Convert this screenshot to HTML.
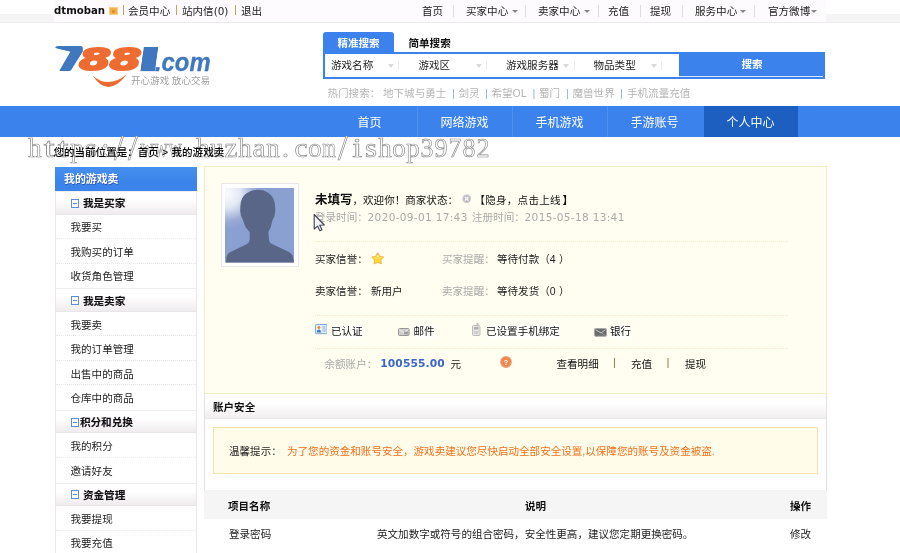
<!DOCTYPE html>
<html lang="zh-CN">
<head>
<meta charset="utf-8">
<title>7881.com 个人中心</title>
<style>
*{margin:0;padding:0;box-sizing:border-box}
html,body{width:900px;height:553px;overflow:hidden;background:#fff}
body{position:relative;font-family:"Liberation Sans","Noto Sans CJK SC",sans-serif;font-size:10.55px;color:#222;line-height:14px}
.a{position:absolute;white-space:nowrap}
body{will-change:transform}
.b{font-weight:bold}
.g{color:#aaa}
/* top bar */
#tb-band-l{left:0;top:14px;width:54px;height:9px;background:#f5f5f5}
#tb-band-r{left:826px;top:14px;width:74px;height:9px;background:#f5f5f5}
#tb-c{left:54px;top:0;width:772px;height:23px;background:#fdfbfd}
#tb-line{left:0;top:22px;width:900px;height:1px;background:#ececec}
.tsep{position:absolute;top:5px;width:1px;height:12px;background:#ddd}
.osep{top:2px;color:#cf9550;font-size:11.5px}
.car{position:absolute;top:10px;width:0;height:0;border-left:3px solid transparent;border-right:3px solid transparent;border-top:3px solid #888}
/* search */
#tab1{left:323px;top:31.6px;width:71px;height:22.4px;background:#3b82ec;border-radius:3px 3px 0 0;color:#fff;font-weight:bold;text-align:center;line-height:22px}
#sbox{left:323px;top:51.6px;width:502px;height:27.4px;border:2px solid #3b82ec;background:#fff}
#sbtn{left:679px;top:53px;width:146px;height:23.5px;background:#3b82ec;color:#fff;font-weight:bold;text-align:center;line-height:22px}
.dar{position:absolute;top:64px;width:0;height:0;border-left:3.5px solid transparent;border-right:3.5px solid transparent;border-top:4px solid #dadada}
.dsep{position:absolute;top:60.5px;width:1px;height:9px;background:#ececec}
.hot{color:#b5b5b5}
.hsep{top:85.5px;color:#8fb1ea;font-size:11px}
/* nav */
#nav{left:0;top:106px;width:900px;height:31.3px;background:#3b82ec}
#nav-on{left:703.6px;top:106px;width:94.6px;height:31.3px;background:#1c5fc0}
.nv{position:absolute;top:106px;width:95px;height:31px;line-height:34.6px;text-align:center;color:#fff;font-size:12px}
.nsep{position:absolute;top:106px;width:1px;height:31.3px;background:#4f90f0}
/* sidebar */
#side{left:54.5px;top:167px;width:142.5px;height:400px;border:1px solid #e9e7e9;border-top:0;background:#fff}
#side-h{left:54.5px;top:167px;width:142.5px;height:24px;background:linear-gradient(#4590ee,#3a84eb 60%)}
.sh{position:absolute;left:55.5px;width:140.5px;height:24px;background:linear-gradient(#fff,#fff 35%,#f0ebee);border-top:1px solid #efefef;border-bottom:1px solid #e9e6e8}
.sd{position:absolute;left:56px;width:140px;height:0;border-top:1px dotted #e9e9e9}
.ico-m{position:absolute;width:8px;height:9px;border:1px solid #5b8fd6;background:#fff}
.ico-m:after{content:"";position:absolute;left:1px;top:3px;width:4px;height:1px;background:#5b8fd6}
/* main panel */
#pn{left:204px;top:166px;width:623px;height:228px;background:#fffef0;border:1px solid #f3ebc3}
.dot{position:absolute;left:315px;width:473px;height:0;border-top:1px dotted #f8e6c4}
#avf{left:221px;top:183.3px;width:78px;height:84px;background:#fff;border:1px solid #e8e6e8}
#sec-h{left:204px;top:394px;width:623px;height:25px;background:linear-gradient(#fff,#fff 35%,#f1eeef);border-left:1px solid #e2e2e2;border-right:1px solid #e2e2e2;border-bottom:1px solid #e8e8e8}
#sec-b{left:204px;top:419px;width:623px;height:71px;border-left:1px solid #e2e2e2;border-right:1px solid #e2e2e2;background:#fff}
#warn{left:213px;top:427px;width:605px;height:47px;background:#fffcea;border:1px solid #f7dfae}
#th{left:204px;top:490px;width:623px;height:29px;background:#f5f5f5}
.or{color:#f2701d}
.dv{font-family:"DejaVu Sans",sans-serif;font-size:10.4px}
.lb{background:#fefefb;line-height:13.2px;color:#111}
.hd{color:#111;text-shadow:.5px .4px 0 rgba(70,30,90,.35)}
.vd{font-family:"DejaVu Sans",sans-serif;font-size:10.5px;letter-spacing:.34px}
</style>
</head>
<body>
<!-- top bar -->
<div class="a" id="tb-band-l"></div><div class="a" id="tb-band-r"></div>
<div class="a" id="tb-c"></div><div class="a" id="tb-line"></div>
<div class="a b" style="left:54.3px;top:4px;font-size:11.3px;color:#111;font-family:'DejaVu Sans',sans-serif;transform:scaleX(.9);transform-origin:0 0">dtmoban</div>
<div class="a" style="left:109px;top:7px;width:8.5px;height:8px;background:#f2b04c;border:1px solid #f7cf86"><div style="position:absolute;left:1.5px;top:1.5px;width:3.5px;height:3px;background:#dc9434"></div></div>
<div class="a osep" style="left:122.0px">|</div>
<div class="a" style="left:128px;top:4px">会员中心</div>
<div class="a osep" style="left:175.0px">|</div>
<div class="a" style="left:182px;top:4px">站内信<span class="dv">(0)</span></div>
<div class="a osep" style="left:234.0px">|</div>
<div class="a" style="left:241px;top:4px">退出</div>

<div class="a" style="left:422px;top:4px">首页</div>
<div class="tsep" style="left:453px"></div>
<div class="a" style="left:466px;top:4px">买家中心</div><div class="car" style="left:512px"></div>
<div class="tsep" style="left:525px"></div>
<div class="a" style="left:538px;top:4px">卖家中心</div><div class="car" style="left:584px"></div>
<div class="tsep" style="left:598px"></div>
<div class="a" style="left:608px;top:4px">充值</div>
<div class="tsep" style="left:640px"></div>
<div class="a" style="left:650px;top:4px">提现</div>
<div class="tsep" style="left:682px"></div>
<div class="a" style="left:695px;top:4px">服务中心</div><div class="car" style="left:740px"></div>
<div class="tsep" style="left:754px"></div>
<div class="a" style="left:768px;top:4px">官方微博</div><div class="car" style="left:811px"></div>

<!-- logo -->
<svg class="a" style="left:50px;top:38px" width="200" height="60" viewBox="50 38 200 60">
<defs><clipPath id="c7"><path d="M53 46H86V73H58L70.5 51.4L53 47.6Z"/></clipPath><clipPath id="c1"><path d="M143.9 47.1H158.3L155 71.3H140.6Z"/></clipPath></defs>
<g clip-path="url(#c1)"><text transform="translate(117.3 71.3) skewX(-7.75) scale(2.9 1)" font-family="Liberation Sans, sans-serif" font-weight="bold" font-size="34" fill="#3f78be" stroke="#3f78be" stroke-width="1">1</text></g>
<g font-family="DejaVu Sans, sans-serif" font-weight="bold" font-style="italic" stroke-linejoin="round">
<g clip-path="url(#c7)"><text transform="translate(55.6 69.4) scale(1.43 1)" font-size="27.8" font-style="normal" fill="#3f78be" stroke="#3f78be" stroke-width="4">7</text></g>
<text transform="translate(78.9 70.3) scale(1.52 1)" font-size="30.4" fill="#ee6c31" stroke="#ee6c31" stroke-width="2">8</text>
<text transform="translate(109.5 70.3) scale(1.52 1)" font-size="30.4" fill="#ee6c31" stroke="#ee6c31" stroke-width="2">8</text>
</g>
<text transform="translate(155 71.3) scale(0.93 1)" font-family="Liberation Sans, sans-serif" font-weight="bold" font-style="italic" font-size="25.6" fill="#3f78be" stroke="#3f78be" stroke-width="0.3">.com</text>
<path d="M92.6 75.4 Q108 89.3 127 74.3 Q108 99 92.6 75.4Z" fill="#ee6c31"/>
<text x="131" y="84" font-family="Liberation Sans, Noto Sans CJK SC, sans-serif" font-size="9.55" fill="#a0a0a0">开心游戏 放心交易</text>
</svg>

<!-- search -->
<div class="a" id="sbox"></div>
<div class="a" id="tab1">精准搜索</div>
<div class="a b" style="left:408.5px;top:36px;color:#111">简单搜索</div>
<div class="a" style="left:331px;top:58px">游戏名称</div><div class="dar" style="left:388px"></div><div class="dsep" style="left:398px"></div>
<div class="a" style="left:418.5px;top:58px">游戏区</div><div class="dar" style="left:475.5px"></div><div class="dsep" style="left:486px"></div>
<div class="a" style="left:506px;top:58px">游戏服务器</div><div class="dar" style="left:563px"></div><div class="dsep" style="left:573.5px"></div>
<div class="a" style="left:593.5px;top:58px">物品类型</div><div class="dar" style="left:650.5px"></div><div class="dsep" style="left:661px"></div>
<div class="a" id="sbtn">搜索</div><div class="a" style="left:679px;top:76px;width:144px;height:1px;background:rgba(255,255,255,.8)"></div>
<div class="a hot" style="left:327.5px;top:85.5px">热门搜索：</div>
<div class="a hot" style="left:383px;top:85.5px">地下城与勇士</div><div class="a hsep" style="left:452.0px">|</div>
<div class="a hot" style="left:458.5px;top:85.5px">剑灵</div><div class="a hsep" style="left:485.0px">|</div>
<div class="a hot" style="left:491.5px;top:85.5px">希望<span class="dv">OL</span></div><div class="a hsep" style="left:532.5px">|</div>
<div class="a hot" style="left:539px;top:85.5px">蜀门</div><div class="a hsep" style="left:566.0px">|</div>
<div class="a hot" style="left:572.5px;top:85.5px">魔兽世界</div><div class="a hsep" style="left:620.0px">|</div>
<div class="a hot" style="left:627px;top:85.5px">手机流量充值</div>

<!-- nav -->
<div class="a" id="nav"></div><div class="a" id="nav-on"></div>
<div class="nv" style="left:322px">首页</div><div class="nsep" style="left:417px"></div>
<div class="nv" style="left:417px">网络游戏</div><div class="nsep" style="left:512px"></div>
<div class="nv" style="left:512px">手机游戏</div><div class="nsep" style="left:607px"></div>
<div class="nv" style="left:607px">手游账号</div>
<div class="nv" style="left:703px">个人中心</div>

<!-- breadcrumb -->


<!-- sidebar -->
<div class="a" id="side"></div>
<div class="a" id="side-h"></div>
<div class="a b" style="left:64px;top:172px;color:#fff;font-size:10.9px;text-shadow:.6px .6px 0 rgba(40,30,120,.45)">我的游戏卖</div>
<div class="sh" style="top:191.0px;height:23.6px"></div>
<div class="ico-m" style="left:71px;top:198.8px"></div>
<div class="a b hd" style="left:83px;top:196.3px">我是买家</div>
<div class="a" style="left:70.5px;top:220.4px">我要买</div>
<div class="sd" style="top:238.1px"></div>
<div class="a" style="left:70.5px;top:244.9px">我购买的订单</div>
<div class="sd" style="top:262.6px"></div>
<div class="a" style="left:70.5px;top:269.4px">收货角色管理</div>
<div class="sh" style="top:288.2px;height:23.6px"></div>
<div class="ico-m" style="left:71px;top:296.0px"></div>
<div class="a b hd" style="left:83px;top:293.5px">我是卖家</div>
<div class="a" style="left:70.5px;top:317.6px">我要卖</div>
<div class="sd" style="top:335.3px"></div>
<div class="a" style="left:70.5px;top:342.1px">我的订单管理</div>
<div class="sd" style="top:359.8px"></div>
<div class="a" style="left:70.5px;top:366.6px">出售中的商品</div>
<div class="sd" style="top:384.3px"></div>
<div class="a" style="left:70.5px;top:391.1px">仓库中的商品</div>
<div class="sh" style="top:409.8px;height:23.6px"></div>
<div class="ico-m" style="left:71px;top:417.6px"></div>
<div class="a b hd" style="left:80px;top:415.1px">积分和兑换</div>
<div class="a" style="left:70.5px;top:439.2px">我的积分</div>
<div class="sd" style="top:457.0px"></div>
<div class="a" style="left:70.5px;top:463.8px">邀请好友</div>
<div class="sh" style="top:482.5px;height:23.6px"></div>
<div class="ico-m" style="left:71px;top:490.3px"></div>
<div class="a b hd" style="left:83px;top:487.8px">资金管理</div>
<div class="a" style="left:70.5px;top:511.9px">我要提现</div>
<div class="sd" style="top:529.6px"></div>
<div class="a" style="left:70.5px;top:536.4px">我要充值</div>

<!-- main panel -->
<div class="a" id="pn"></div>
<div class="a" id="avf"></div>
<svg class="a" style="left:225px;top:188px" width="69" height="74.5" viewBox="0 0 69 74.5">
<defs><radialGradient id="avg" gradientUnits="userSpaceOnUse" cx="2" cy="6" r="44"><stop offset="0" stop-color="#fbfcfe"/><stop offset="0.3" stop-color="#e3e8f4"/><stop offset="0.62" stop-color="#98abd5"/><stop offset="0.8" stop-color="#8aa0d0"/><stop offset="1" stop-color="#8aa0d0"/></radialGradient></defs>
<rect width="69" height="74.5" fill="url(#avg)"/>
<path d="M0.9 74.5 L1.5 69 Q2 65.5 6 63.8 L22 56 Q24.7 54.5 24.7 51 L24.7 44 Q19.5 39 18 32 Q14.5 27 15.3 20 Q15 9 22 5 Q32 -1 42 4 Q50.5 9 50.2 20 Q51 27 47.5 32 Q46.5 39 43.4 44 L43.9 51 Q44 54.5 47 56 L63 63.5 Q67.5 65.5 68 69 L68.9 74.5Z" fill="#5a6688"/>
</svg>
<div class="a" style="left:315px;top:192.5px;color:#111"><span class="b" style="font-size:12.5px">未填写</span>，欢迎你！商家状态：</div>
<svg class="a" style="left:462px;top:193.6px" width="9.4" height="9.4" viewBox="0 0 9.4 9.4"><circle cx="4.7" cy="4.7" r="4.5" fill="#d0d0d3"/><circle cx="4.7" cy="4.7" r="3.5" fill="#bdbdc1"/><path d="M2.9 2.9L6.5 6.5M6.5 2.9L2.9 6.5" stroke="#f7f7f7" stroke-width="1.3"/></svg>
<div class="a" style="left:474.4px;top:193px;color:#111;letter-spacing:.25px">【隐身，点击上线<span style="margin-left:1.8px;font-weight:bold">】</span></div>
<div class="a g" style="left:315px;top:209.5px">登录时间：</div>
<div class="a g vd" style="left:367.6px;top:209.5px">2020-09-01 17:43</div>
<div class="a g" style="left:472px;top:209.5px">注册时间：</div>
<div class="a g vd" style="left:524.6px;top:209.5px">2015-05-18 13:41</div>
<div class="dot" style="top:241px"></div>
<div class="a" style="left:315px;top:252px">买家信誉：</div>
<svg class="a" style="left:370.5px;top:252.1px" width="13.4" height="13.4" viewBox="0 0 13.4 13.4"><defs><linearGradient id="stg" x1="0" y1="0" x2="0" y2="1"><stop offset="0" stop-color="#fff3b0"/><stop offset="0.45" stop-color="#ffe24a"/><stop offset="1" stop-color="#ffd21c"/></linearGradient></defs><path d="M6.70 0.90 L8.64 4.23 L12.41 5.05 L9.84 7.92 L10.23 11.75 L6.70 10.20 L3.17 11.75 L3.56 7.92 L0.99 5.05 L4.76 4.23Z" fill="url(#stg)" stroke="#f8ba50" stroke-width="1.15" stroke-linejoin="round"/></svg>
<div class="a g" style="left:442px;top:252px">买家提醒：</div>
<div class="a" style="left:497px;top:252px">等待付款（4<span style="margin-left:3.5px">）</span></div>
<div class="a" style="left:315px;top:284px">卖家信誉：</div>
<div class="a" style="left:371px;top:284px">新用户</div>
<div class="a g" style="left:442px;top:284px">卖家提醒：</div>
<div class="a" style="left:497px;top:284px">等待发货（0<span style="margin-left:3.5px">）</span></div>
<div class="dot" style="top:314.5px"></div>
<!-- icons row -->
<svg class="a" style="left:314.7px;top:324.2px" width="12.6" height="10.4" viewBox="0 0 12.6 10.4"><rect x="0.5" y="0.5" width="11.6" height="9.2" rx="0.8" fill="#ddebf9" stroke="#7eaadf"/><rect x="1.6" y="1.5" width="4.6" height="7" fill="#f6fafe"/><circle cx="3.9" cy="3.6" r="1.5" fill="#e3873a"/><path d="M1.8 8.5Q1.8 5.4 3.9 5.4Q6 5.4 6 8.5Z" fill="#3c79cb"/><path d="M7.3 3H10.8M7.3 5H10.8M7.3 7H10.8" stroke="#8fb3e2" stroke-width="0.9"/></svg>
<div class="a lb" style="left:331px;top:325.3px">已认证</div>
<svg class="a" style="left:398px;top:328.2px" width="12" height="8.2" viewBox="0 0 12 8.2"><rect x="0.5" y="0.5" width="10.6" height="7" rx="1" fill="#cfcfcf" stroke="#979797"/><path d="M1.3 1.5L5.8 4.6L10.3 1.5" stroke="#f2f2f2" stroke-width="0.9" fill="none"/><rect x="6" y="3.6" width="4" height="2.6" fill="#8d8d8d" opacity=".75"/></svg>
<div class="a lb" style="left:413.5px;top:325.3px">邮件</div>
<svg class="a" style="left:472px;top:323px" width="9" height="13" viewBox="0 0 9 13"><rect x="4.5" y="0" width="2" height="3" fill="#bdbdbd"/><rect x="0.5" y="2.5" width="7.5" height="10" rx="1" fill="#e6e6e6" stroke="#bcbcbc"/><rect x="2" y="4" width="4.5" height="2.5" fill="#b0b0b0"/><rect x="2" y="8" width="4.5" height="3" fill="#cfcfcf"/></svg>
<div class="a lb" style="left:486px;top:325.3px">已设置手机绑定</div>
<svg class="a" style="left:594px;top:328px" width="13" height="9" viewBox="0 0 13 9"><rect x="0.5" y="0.5" width="12" height="7.8" rx="1.2" fill="#6b6b6b" stroke="#a9a9a9"/><path d="M1.5 1.6L7 5L11.5 1.6" stroke="#c9c9c9" stroke-width="1" fill="none"/><path d="M7 5L11.8 7.6" stroke="#9a9a9a" stroke-width="0.8"/></svg>
<div class="a lb" style="left:610px;top:325.3px">银行</div>
<div class="dot" style="top:347.5px"></div>
<div class="a g" style="left:324.5px;top:356.5px">余额账户：</div>
<div class="a b" style="left:380.3px;top:357.3px;color:#3a66c8;font-family:'DejaVu Sans',sans-serif;font-size:10.7px;letter-spacing:.1px">100555.00</div>
<div class="a" style="left:450.5px;top:356.5px">元</div>
<svg class="a" style="left:500.3px;top:355.9px" width="12" height="12" viewBox="0 0 12 12"><circle cx="6" cy="6" r="5.9" fill="#f09c6a"/><circle cx="6" cy="6" r="4.7" fill="#ee864e"/><text x="6" y="8.7" text-anchor="middle" font-family="Liberation Sans, sans-serif" font-size="7.4" font-weight="bold" fill="#fff">?</text></svg>
<div class="a" style="left:556.5px;top:356.5px;color:#111">查看明细</div>
<div class="a" style="left:613px;top:355px;color:#a5703a;font-size:11.5px">|</div>
<div class="a" style="left:631px;top:356.5px;color:#111">充值</div>
<div class="a" style="left:666.5px;top:355px;color:#a5703a;font-size:11.5px">|</div>
<div class="a" style="left:685px;top:356.5px;color:#111">提现</div>
<!-- cursor -->
<svg class="a" style="left:313px;top:213px" width="14" height="20" viewBox="-1.2 -1.5 14 20"><path d="M0 0 L0 14.6 L3.3 11.6 L5.7 16.2 L7.8 15.3 L5.5 10.7 L10.1 10.5Z" fill="#f3f3f8" stroke="#3b4052" stroke-width="1.1" stroke-linejoin="round"/></svg>

<!-- account security -->
<div class="a" id="sec-h"></div>
<div class="a b" style="left:213px;top:400px;color:#111">账户安全</div>
<div class="a" id="sec-b"></div>
<div class="a" id="warn"></div>
<div class="a" style="left:229px;top:443.5px;color:#222">温馨提示：</div>
<div class="a or" style="left:287px;top:443.5px">为了您的资金和账号安全，游戏卖建议您尽快启动全部安全设置,以保障您的账号及资金被盗.</div>
<div class="a" id="th"></div>
<div class="a b" style="left:228px;top:498.5px;color:#111">项目名称</div>
<div class="a b" style="left:525px;top:498.5px;color:#111">说明</div>
<div class="a b" style="left:790px;top:498.5px;color:#111">操作</div>
<div class="a" style="left:229px;top:526.5px">登录密码</div>
<div class="a" style="left:377px;top:526.5px">英文加数字或符号的组合密码，安全性更高，建议您定期更换密码。</div>
<div class="a" style="left:790px;top:526.5px">修改</div>
<!-- watermark -->
<svg class="a" style="left:0;top:120px" width="520" height="50" viewBox="0 120 520 50">
<text font-family="Liberation Serif, serif" font-size="28" fill="#fff" fill-opacity="0.88" stroke="#8a8a8a" stroke-width="0.68"><tspan x="28.3" y="157.2" textLength="13.4" lengthAdjust="spacingAndGlyphs">h</tspan><tspan x="43.8" y="157.2" textLength="11.0" lengthAdjust="spacingAndGlyphs">t</tspan><tspan x="57.8" y="157.2" textLength="11.0" lengthAdjust="spacingAndGlyphs">t</tspan><tspan x="70.3" y="157.2" textLength="13.4" lengthAdjust="spacingAndGlyphs">p</tspan><tspan x="85.0" y="157.2" textLength="12.0" lengthAdjust="spacingAndGlyphs">s</tspan><tspan x="101.5" y="157.2">:</tspan><tspan x="114.0" y="159.9" font-size="35">/</tspan><tspan x="128.0" y="159.9" font-size="35">/</tspan><tspan x="140.2" y="157.2" textLength="13.6" lengthAdjust="spacingAndGlyphs">w</tspan><tspan x="154.2" y="157.2" textLength="13.6" lengthAdjust="spacingAndGlyphs">w</tspan><tspan x="168.2" y="157.2" textLength="13.6" lengthAdjust="spacingAndGlyphs">w</tspan><tspan x="184.0" y="157.2">.</tspan><tspan x="196.3" y="157.2" textLength="13.4" lengthAdjust="spacingAndGlyphs">h</tspan><tspan x="210.3" y="157.2" textLength="13.4" lengthAdjust="spacingAndGlyphs">u</tspan><tspan x="224.5" y="157.2" textLength="13.0" lengthAdjust="spacingAndGlyphs">z</tspan><tspan x="238.3" y="157.2" textLength="13.4" lengthAdjust="spacingAndGlyphs">h</tspan><tspan x="252.5" y="157.2" textLength="13.0" lengthAdjust="spacingAndGlyphs">a</tspan><tspan x="266.3" y="157.2" textLength="13.4" lengthAdjust="spacingAndGlyphs">n</tspan><tspan x="282.0" y="157.2">.</tspan><tspan x="294.5" y="157.2" textLength="13.0" lengthAdjust="spacingAndGlyphs">c</tspan><tspan x="308.3" y="157.2" textLength="13.4" lengthAdjust="spacingAndGlyphs">o</tspan><tspan x="322.2" y="157.2" textLength="13.6" lengthAdjust="spacingAndGlyphs">m</tspan><tspan x="338.0" y="159.9" font-size="35">/</tspan><tspan x="352.2" y="157.2" textLength="10.0" lengthAdjust="spacingAndGlyphs">i</tspan><tspan x="365.0" y="157.2" textLength="12.0" lengthAdjust="spacingAndGlyphs">s</tspan><tspan x="378.3" y="157.2" textLength="13.4" lengthAdjust="spacingAndGlyphs">h</tspan><tspan x="392.3" y="157.2" textLength="13.4" lengthAdjust="spacingAndGlyphs">o</tspan><tspan x="406.3" y="157.2" textLength="13.4" lengthAdjust="spacingAndGlyphs">p</tspan><tspan x="420.5" y="157.2" textLength="13.0" lengthAdjust="spacingAndGlyphs">3</tspan><tspan x="434.5" y="157.2" textLength="13.0" lengthAdjust="spacingAndGlyphs">9</tspan><tspan x="448.5" y="157.2" textLength="13.0" lengthAdjust="spacingAndGlyphs">7</tspan><tspan x="462.5" y="157.2" textLength="13.0" lengthAdjust="spacingAndGlyphs">8</tspan><tspan x="476.5" y="157.2" textLength="13.0" lengthAdjust="spacingAndGlyphs">2</tspan></text>
</svg>
<!-- breadcrumb (over watermark) -->
<div class="a" style="left:53.4px;top:145.4px;color:#000;font-weight:500">您的当前位置是：首页</div>
<div class="a" style="left:162px;top:145.4px;color:#000;font-weight:500">&gt;</div>
<div class="a" style="left:171.5px;top:145.4px;color:#000;font-weight:500">我的游戏卖</div>
</body>
</html>
